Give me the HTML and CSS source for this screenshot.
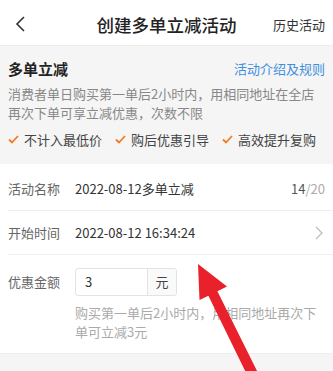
FILE: index.html
```html
<!DOCTYPE html>
<html lang="zh">
<head>
<meta charset="utf-8">
<link rel="stylesheet" href="styles.css">
</head>
<body>
<div class="page">
  <header class="header">
    <span class="back">
      <svg width="14" height="18" viewBox="0 0 14 18"><path d="M10 2 L3 9 L10 16" fill="none" stroke="#333" stroke-width="1.6"/></svg>
    </span>
    <span class="title">创建多单立减活动</span>
    <span class="history">历史活动</span>
  </header>

  <section class="intro">
    <div class="intro-head">
      <span class="intro-title">多单立减</span>
      <span class="intro-link">活动介绍及规则</span>
    </div>
    <p class="intro-desc">消费者单日购买第一单后2小时内，用相同地址在全店再次下单可享立减优惠，次数不限</p>
    <div class="checks">
      <span class="check"><svg width="11" height="9" viewBox="0 0 11 9"><path d="M1 4.5 L4 7.5 L10 1" fill="none" stroke="#f47a22" stroke-width="1.8"/></svg>不计入最低价</span>
      <span class="check"><svg width="11" height="9" viewBox="0 0 11 9"><path d="M1 4.5 L4 7.5 L10 1" fill="none" stroke="#f47a22" stroke-width="1.8"/></svg>购后优惠引导</span>
      <span class="check"><svg width="11" height="9" viewBox="0 0 11 9"><path d="M1 4.5 L4 7.5 L10 1" fill="none" stroke="#f47a22" stroke-width="1.8"/></svg>高效提升复购</span>
    </div>
  </section>

  <section class="form">
    <div class="row">
      <span class="label">活动名称</span>
      <span class="value">2022-08-12多单立减</span>
      <span class="count"><b>14</b>/20</span>
    </div>
    <div class="row">
      <span class="label">开始时间</span>
      <span class="value">2022-08-12 16:34:24</span>
      <svg class="chev" width="8" height="14" viewBox="0 0 8 14"><path d="M1 1 L7 7 L1 13" fill="none" stroke="#bbb" stroke-width="1.2"/></svg>
    </div>
    <div class="row row-amount">
      <span class="label">优惠金额</span>
      <div class="amount">
        <div class="input">
          <span class="input-val">3</span>
          <span class="unit">元</span>
        </div>
        <p class="hint">购买第一单后2小时内，用相同地址再次下单可立减3元</p>
      </div>
    </div>
  </section>
  <div class="bottom"></div>

  <svg class="arrow" width="333" height="371" viewBox="0 0 333 371">
    <polygon points="198,264 227,286.5 217.4,291.2 262,381 252,385 208.4,295.7 199.5,300" fill="#e8212b"/>
  </svg>
</div>
</body>
</html>
```

FILE: styles.css
```css
* { box-sizing: border-box; }
html, body { margin: 0; padding: 0; }
body {
  font-family: "Noto Sans CJK SC", "Noto Sans", sans-serif;
  background: #f5f5f5;
  color: #333;
  width: 333px;
  height: 371px;
  overflow: hidden;
}
.page { position: relative; width: 333px; height: 371px; overflow: hidden; }

.header {
  height: 46px;
  background: #fff;
  border-bottom: 1px solid #ececec;
  display: flex;
  align-items: center;
  padding: 3px 8px 0 14px;
  position: relative;
}
.back { display: flex; align-items: center; }
.title {
  position: absolute;
  left: 0; right: 0;
  top: 3px; bottom: 0;
  display: flex;
  align-items: center;
  justify-content: center;
  font-size: 17.5px;
  font-weight: 500;
  color: #222;
  pointer-events: none;
}
.history { margin-left: auto; font-size: 13px; color: #333; }

.intro {
  background: #f5f5f5;
  padding: 11px 8px 15px 8px;
}
.intro-head {
  display: flex;
  justify-content: space-between;
  align-items: center;
  height: 22px;
}
.intro-title { font-size: 15px; font-weight: bold; color: #222; }
.intro-link { font-size: 13px; color: #3f8fe0; }
.intro-desc {
  margin: 5px 0 0 0;
  font-size: 13px;
  line-height: 19px;
  color: #888;
}
.checks {
  display: flex;
  margin-top: 7px;
  height: 20px;
  align-items: center;
}
.check {
  display: flex;
  align-items: center;
  gap: 5px;
  font-size: 13px;
  color: #444;
  margin-right: 13px;
}
.check:last-child { margin-right: 0; }

.form { background: #fff; padding-left: 8px; }
.row {
  display: flex;
  align-items: center;
  height: 44px;
  border-bottom: 1px solid #eee;
  padding-right: 8px;
  font-size: 13px;
}
.row:first-child { height: 47px; padding-top: 3px; }
.label { width: 67px; color: #666; flex: none; }
.value { color: #333; flex: 1; }
.count { color: #aaa; }
.count b { font-weight: normal; color: #555; }
.chev { margin-right: 2px; }

.row-amount {
  height: 98px;
  align-items: flex-start;
  padding-top: 13px;
  border-bottom: none;
}
.row-amount .label { line-height: 28px; }
.amount { flex: 1; }
.input {
  display: flex;
  width: 102px;
  height: 28px;
  border: 1px solid #e3e3e3;
  border-radius: 3px;
  overflow: hidden;
}
.input-val { flex: 1; padding-left: 9px; line-height: 26px; color: #333; font-size: 13px; }
.unit {
  width: 29px;
  border-left: 1px solid #e3e3e3;
  background: #fafafa;
  text-align: center;
  line-height: 26px;
  color: #444;
}
.hint {
  margin: 7px 0 0 0;
  font-size: 13px;
  line-height: 19px;
  color: #aaa;
}
.bottom { height: 20px; background: #f5f5f5; border-top: 1px solid #eee; }

.arrow { position: absolute; left: 0; top: 0; pointer-events: none; }
```
